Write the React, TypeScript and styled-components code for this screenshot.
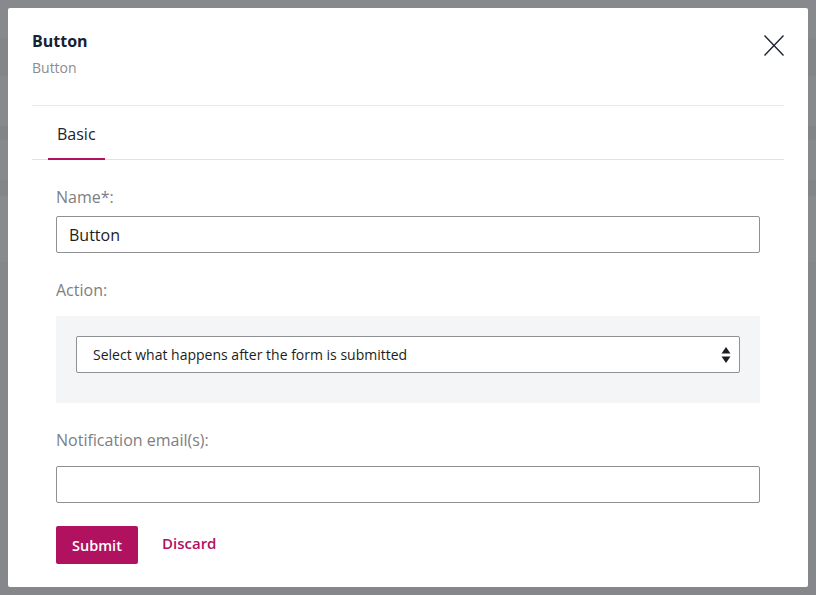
import styled, { createGlobalStyle } from "styled-components";

const GlobalStyle = createGlobalStyle`
  html, body {
    margin: 0;
    padding: 0;
    background: #86888c;
  }
  * {
    box-sizing: border-box;
  }
`;

const accent = "#b0125f";

const Backdrop = styled.div`
  width: 816px;
  height: 595px;
  padding: 8px;
  background: linear-gradient(
    180deg,
    #88898d 0px,
    #88898d 38px,
    #838589 38px,
    #838589 76px,
    #88898d 76px,
    #88898d 126px,
    #828488 126px,
    #828488 140px,
    #88898d 140px,
    #88898d 180px,
    #838589 180px,
    #838589 196px,
    #898a8e 196px,
    #898a8e 262px,
    #85878b 262px
  );
  font-family: "Open Sans", "Noto Sans", sans-serif;
`;

const Modal = styled.div`
  width: 800px;
  height: 579px;
  background: #ffffff;
  border-radius: 2px;
  padding: 23px 24px 0;
  display: flex;
  flex-direction: column;
`;

const Header = styled.div`
  display: flex;
  justify-content: space-between;
  align-items: flex-start;
  padding-bottom: 28px;
  border-bottom: 1px solid #e8e9eb;
`;

const TitleBlock = styled.div`
  display: flex;
  flex-direction: column;
  gap: 7px;
`;

const Title = styled.h2`
  margin: 0;
  font-size: 16px;
  line-height: 21px;
  font-weight: 700;
  color: #172132;
`;

const Subtitle = styled.div`
  font-size: 14px;
  line-height: 18px;
  color: #8b8c8f;
`;

const CloseButton = styled.button`
  border: none;
  background: none;
  padding: 0;
  margin-top: 4px;
  width: 20px;
  height: 21px;
  cursor: pointer;
  display: flex;
`;

const TabBar = styled.div`
  display: flex;
  padding-left: 16px;
  border-bottom: 1px solid #e1e2e5;
`;

const Tab = styled.div<{ $active?: boolean }>`
  padding: 18px 9px 14px;
  font-size: 16px;
  line-height: 20px;
  color: #1c2230;
  border-bottom: 2px solid ${(p) => (p.$active ? accent : "transparent")};
  margin-bottom: -1px;
`;

const Form = styled.div`
  padding: 27px 24px 0;
  display: flex;
  flex-direction: column;
`;

const Label = styled.label<{ $gap: number; $top?: number }>`
  display: block;
  font-size: 16px;
  line-height: 20px;
  color: #7d7e82;
  margin-top: ${(p) => p.$top ?? 0}px;
  margin-bottom: ${(p) => p.$gap}px;
`;

const TextInput = styled.input`
  width: 100%;
  height: 37px;
  border: 1px solid #8f9094;
  border-radius: 2px;
  padding: 0 12px;
  font-family: inherit;
  font-size: 16px;
  color: #1b1d22;
  outline: none;
  background: #fff;
`;

const Panel = styled.div`
  background: #f4f5f7;
  padding: 20px 20px 30px;
`;

const SelectBox = styled.div`
  height: 37px;
  border: 1px solid #8f9094;
  border-radius: 2px;
  background: #fff;
  display: flex;
  align-items: center;
  justify-content: space-between;
  padding: 0 8px 0 16px;
  font-size: 14px;
  color: #1b1d22;
`;

const Actions = styled.div`
  display: flex;
  align-items: center;
  gap: 24px;
  margin-top: 23px;
`;

const PrimaryButton = styled.button`
  height: 38px;
  width: 82px;
  border: none;
  border-radius: 2px;
  background: ${accent};
  color: #fff;
  font-family: inherit;
  font-size: 14.5px;
  font-weight: 600;
  padding-top: 2px;
`;

const LinkButton = styled.button`
  border: none;
  background: none;
  padding: 0;
  color: ${accent};
  font-family: inherit;
  font-size: 15px;
  font-weight: 600;
  margin-bottom: 5px;
`;

export default function App() {
  return (
    <>
      <GlobalStyle />
      <Backdrop>
        <Modal>
          <Header>
            <TitleBlock>
              <Title>Button</Title>
              <Subtitle>Button</Subtitle>
            </TitleBlock>
            <CloseButton aria-label="Close">
              <svg width="20" height="21" viewBox="0 0 20 21">
                <path d="M0.5 0.5 L19.5 20.5 M19.5 0.5 L0.5 20.5" stroke="#1e2433" strokeWidth="1.4" fill="none" />
              </svg>
            </CloseButton>
          </Header>
          <TabBar>
            <Tab $active>Basic</Tab>
          </TabBar>
          <Form>
            <Label $gap={9}>Name*:</Label>
            <TextInput defaultValue="Button" />
            <Label $top={27} $gap={16}>Action:</Label>
            <Panel>
              <SelectBox>
                <span>Select what happens after the form is submitted</span>
                <svg width="10" height="18" viewBox="0 0 10 18">
                  <path d="M5 1 L9.5 7.5 L0.5 7.5 Z" fill="#1b1d22" />
                  <path d="M0.5 10.5 L9.5 10.5 L5 17 Z" fill="#1b1d22" />
                </svg>
              </SelectBox>
            </Panel>
            <Label $top={27} $gap={16}>Notification email(s):</Label>
            <TextInput />
            <Actions>
              <PrimaryButton>Submit</PrimaryButton>
              <LinkButton>Discard</LinkButton>
            </Actions>
          </Form>
        </Modal>
      </Backdrop>
    </>
  );
}
